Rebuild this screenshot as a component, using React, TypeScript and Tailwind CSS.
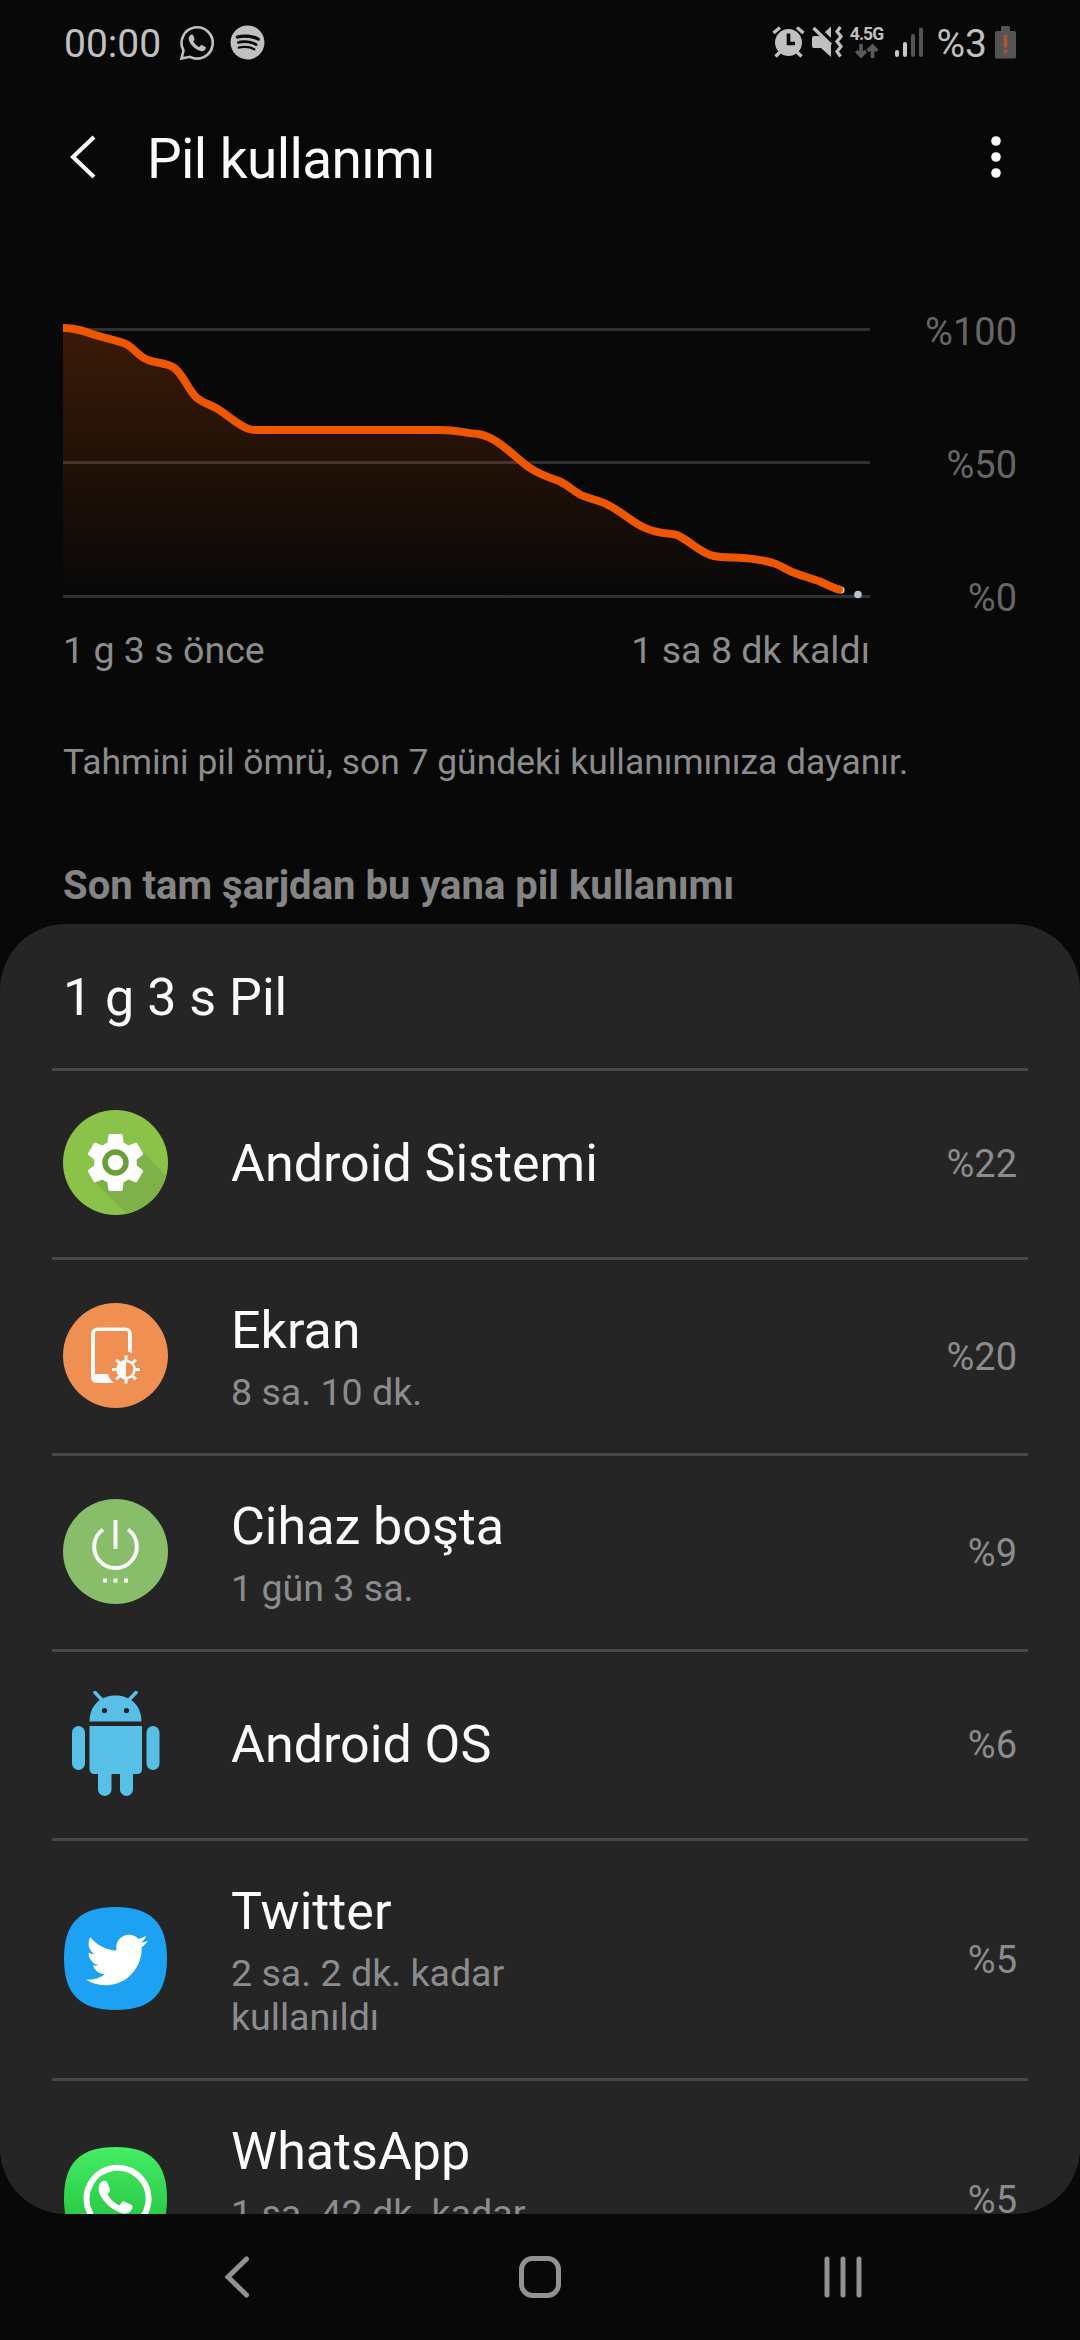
import { FaSpotify, FaTwitter } from "react-icons/fa";
import { MdSettings } from "react-icons/md";
import type { ReactNode } from "react";

interface AppUsage {
  name: string;
  detail?: string;
  percent: string;
  icon: ReactNode;
  height: string;
}

const HANDSET =
  "M190 900C180 903 174 915 176 928C180 955 215 990 252 998C265 999 277 990 278 976C278 972 250 960 249 961C246 963 242 970 238 973C228 970 208 952 203 939C206 936 211 930 210 927C208 918 203 905 200 901C197 899 193 899 190 900Z";

const SQUIRCLE =
  "M52.5 1C88 1 104 17 104 52.5C104 88 88 104 52.5 104C17 104 1 88 1 52.5C1 17 17 1 52.5 1Z";

const LINE =
  "M0 8C13 8 21 11 29 14C41 18 56 21 63 24C71 28 76 37 85 40C93 43 103 43 110 47C120 53 124 69 134 78C140 83 146 84 153 88C165 95 176 106 186 109C188 110 190 110 193 110H378C393 110 402 113 415 114C435 117 450 136 467 148C476 154 487 158 496 161C505 165 510 171 518 175C526 179 536 180 545 185C557 191 567 200 578 206C584 209 589 211 595 212C602 214 608 213 614 215C626 220 637 233 651 236C660 238 671 237 681 238C690 239 702 240 710 243C717 245 722 249 729 252C739 256 748 258 758 262C765 265 770 268 776 269.5";

const teeth = [0, 45, 90, 135, 180, 225, 270, 315];

function GearIcon() {
  return (
    <div className="relative flex size-[105px] items-center justify-center overflow-hidden rounded-full bg-[#8bc34a]">
      <svg className="absolute inset-0" viewBox="0 0 105 105">
        <path d="M31 71L65 105H105V68L80 42Z" fill="#7fb149" />
      </svg>
      <MdSettings className="relative size-[71px] text-white" />
      <svg className="absolute inset-0" viewBox="0 0 105 105">
        <circle cx="52.5" cy="52.5" r="10.5" fill="#fff" stroke="#689f38" strokeWidth="5.5" />
      </svg>
    </div>
  );
}

function ScreenIcon() {
  return (
    <svg viewBox="0 0 105 105" className="size-[105px]">
      <circle cx="52.5" cy="52.5" r="52.5" fill="#ef8f52" />
      <path d="M28 71V32Q28 24.5 35 24.5H62Q69 24.5 69 32V50L65 48.5V30Q65 28 63 28H34Q32 28 32 30V71H45Q46 76 51 80H34Q28 80 28 74Z" fill="#fafafa" />
      <circle cx="63" cy="66.5" r="8.5" fill="none" stroke="#fafafa" strokeWidth="2.5" />
      <path d="M63 58A8.5 8.5 0 0 0 63 75Z" fill="#fafafa" />
      {teeth.map((a) => (
        <path key={a} d="M63 52.5V57" stroke="#fafafa" strokeWidth="3" transform={`rotate(${a} 63 66.5)`} />
      ))}
    </svg>
  );
}

function IdleIcon() {
  return (
    <svg viewBox="0 0 105 105" className="size-[105px]">
      <circle cx="52.5" cy="52.5" r="52.5" fill="#88bd69" />
      <path d="M40 30.5A21.3 21.3 0 1 0 65 30.5M52.5 21V50" fill="none" stroke="#fafafa" strokeWidth="4" />
      <path d="M40 81.5H44M50.5 81.5H54.5M61 81.5H65" stroke="#fafafa" strokeWidth="4" />
    </svg>
  );
}

function AndroidIcon() {
  return (
    <svg viewBox="0 0 105 105" className="size-[105px]" fill="#58c0e6">
      <path d="M26.5 30.5C26.5 15 37 4.5 52.5 4.5S78.5 15 78.5 30.5Z" />
      <path d="M32 1.5L40 10M73 1.5L65 10" stroke="#58c0e6" strokeWidth="3.5" strokeLinecap="round" />
      <circle cx="41.5" cy="19.5" r="2.6" fill="#252525" />
      <circle cx="63.5" cy="19.5" r="2.6" fill="#252525" />
      <path d="M26.5 35H79V78Q79 83 74 83H31.5Q26.5 83 26.5 78Z" />
      <rect x="9" y="35" width="13" height="44" rx="6.5" />
      <rect x="83.5" y="35" width="13" height="44" rx="6.5" />
      <path d="M35 80H48.500V98.5A6.75 6.5 0 0 1 35 98.5ZM57 80H70V98.5A6.5 6.5 0 0 1 57 98.5Z" />
    </svg>
  );
}

function TwitterIcon() {
  return (
    <div className="relative flex size-[105px] items-center justify-center">
      <svg className="absolute inset-0" viewBox="0 0 105 105">
        <path d={SQUIRCLE} fill="#1da1f2" />
      </svg>
      <FaTwitter className="relative mt-1 ml-0.5 size-[62px] text-white" />
    </div>
  );
}

function WhatsAppIcon() {
  return (
    <svg viewBox="0 0 105 105" className="size-[105px]">
      <defs>
        <linearGradient id="wa" x1="0" y1="0" x2="0" y2="1">
          <stop offset="0" stopColor="#45ec66" />
          <stop offset="1" stopColor="#1dba35" />
        </linearGradient>
      </defs>
      <path d={SQUIRCLE} fill="url(#wa)" />
      <path d="M22 83L27 67A31 31 0 1 1 38 79Z" fill="none" stroke="#fff" strokeWidth="6" />
      <path d={HANDSET} fill="#fff" transform="translate(-23 -265) scale(.3333)" />
    </svg>
  );
}

function UsageRow({ name, detail, percent, icon, height }: AppUsage) {
  return (
    <li className={`flex shrink-0 items-center border-t-[3px] border-[#484848] px-[11px] pb-[3px] ${height}`}>
      {icon}
      <div className="ml-[63px] flex-1">
        <h3 className={`text-[52px] leading-[70px] text-[#fafafa] ${detail ? "" : "pt-[3px]"}`}>{name}</h3>
        {detail && <p className="mt-1 w-[310px] text-[37.6px] leading-[44px] text-[#8c8c8c]">{detail}</p>}
      </div>
      <span className="pt-[3px] text-[38px] leading-[44px] text-[#8c8c8c]">{percent}</span>
    </li>
  );
}

const usage: AppUsage[] = [
  { name: "Android Sistemi", percent: "%22", icon: <GearIcon />, height: "h-[189px]" },
  { name: "Ekran", detail: "8 sa. 10 dk.", percent: "%20", icon: <ScreenIcon />, height: "h-[196px]" },
  { name: "Cihaz boşta", detail: "1 gün 3 sa.", percent: "%9", icon: <IdleIcon />, height: "h-[196px]" },
  { name: "Android OS", percent: "%6", icon: <AndroidIcon />, height: "h-[189px]" },
  { name: "Twitter", detail: "2 sa. 2 dk. kadar kullanıldı", percent: "%5", icon: <TwitterIcon />, height: "h-[240px]" },
  { name: "WhatsApp", detail: "1 sa. 42 dk. kadar kullanıldı", percent: "%5", icon: <WhatsAppIcon />, height: "h-[240px]" },
];

function StatusBar() {
  return (
    <div className="flex h-[84px] items-center justify-between px-16 text-[#c0c0c0]">
      <div className="flex items-center">
        <span className="w-[116px] pt-[3px] text-[39px] leading-[44px]">00:00</span>
        <svg viewBox="0 0 34 35" className="h-[35px] w-[34px]">
          <path d="M1.5 33.5L3.5 25.5A15.6 15.6 0 1 1 10 31.8Z" fill="none" stroke="#c0c0c0" strokeWidth="2.6" />
          <path d={HANDSET} fill="#c0c0c0" transform="translate(-20.8 -141.5) scale(.168)" />
        </svg>
        <FaSpotify className="ml-4 size-[35px]" />
      </div>
      <div className="flex items-center">
        <svg viewBox="0 0 33 32" className="h-[32px] w-[33px]">
          <path d="M1.5 7L8 1.5M31.5 7L25 1.5M8 26L3.5 30.5M25 26L29.5 30.5" stroke="#c0c0c0" strokeWidth="3.4" />
          <circle cx="16.5" cy="16.5" r="13.5" fill="#c0c0c0" />
          <path d="M16.5 7.5V17.5H23" fill="none" stroke="#080808" strokeWidth="3.6" />
        </svg>
        <svg viewBox="0 0 32 32" className="ml-1.5 h-[32px] w-[32px]" fill="#c0c0c0">
          <path d="M1 12Q1 10 3 10H8L20 18V31L10 22H3Q1 22 1 20Z" />
          <path d="M2.5 2L20 19" stroke="#c0c0c0" strokeWidth="3.2" />
          <path d="M14 6L20 0.5V12Z" />
          <path d="M29.5 1L26 5.5L30 10.5L26 15.5L30 20.5L26 25.5L29.5 30.5" fill="none" stroke="#c0c0c0" strokeWidth="3.2" />
        </svg>
        <div className="ml-[7px] flex w-[34px] flex-col items-center">
          <span className="text-[17.5px] leading-[17px] font-bold tracking-[-0.9px]">4.5G</span>
          <svg viewBox="0 0 24 16" className="h-[16px] w-[24px]" fill="none" stroke="#5b5b5b" strokeWidth="3.6">
            <path d="M6 1V13M1.2 8L6 13L10.8 8M17.5 15V3M12.7 8L17.5 3L22.3 8" />
          </svg>
        </div>
        <svg viewBox="0 0 28 31" className="ml-[11px] h-[31px] w-[28px]" strokeWidth="4" strokeLinecap="round">
          <path d="M2 25V28M10 17V28" stroke="#c8c8c8" />
          <path d="M18 9V28M26 2.5V28" stroke="#545454" />
        </svg>
        <span className="ml-3.5 pt-[3px] text-[39px] leading-[44px]">%3</span>
        <svg viewBox="0 0 21 33" className="ml-2 h-[33px] w-[21px]">
          <path d="M6 5V1.5Q6 0 7.5 0H13.5Q15 0 15 1.500V5H19.5Q21 5 21 6.5V31Q21 32.5 19.5 32.5H1.5Q0 32.5 0 31V6.5Q0 5 1.5 5Z" fill="#545454" />
          <path d="M10.5 9V21.5M10.5 23.5V27" stroke="#b9522f" strokeWidth="3.6" />
        </svg>
      </div>
    </div>
  );
}

function BatteryChart() {
  return (
    <section className="mt-[90px] px-[63px]">
      <div className="flex h-[290px] justify-between">
        <svg viewBox="0 0 807 290" className="h-[290px] w-[807px]">
          <defs>
            <linearGradient id="usage" x1="0" y1="8" x2="0" y2="278" gradientUnits="userSpaceOnUse">
              <stop offset="0" stopColor="#f05a00" stopOpacity=".22" />
              <stop offset="1" stopColor="#f05a00" stopOpacity="0" />
            </linearGradient>
          </defs>
          <path d="M0 9.5H807M0 142.5H807M0 276.5H807" stroke="#303030" strokeWidth="3" />
          <path d={`${LINE}V278H0Z`} fill="url(#usage)" />
          <circle cx="778" cy="270" r="3.5" fill="#e8d8d0" />
          <path d={LINE} fill="none" stroke="#ee5700" strokeWidth="8" />
          <circle cx="776" cy="269.5" r="4" fill="#ee5700" />
          <circle cx="795" cy="274.5" r="3.8" fill="#b4c4cc" />
        </svg>
        <div className="-mt-[10px] flex h-[310px] flex-col justify-between text-right text-[38px] leading-[44px] text-[#666666]">
          <span>%100</span>
          <span>%50</span>
          <span>%0</span>
        </div>
      </div>
      <div className="mt-[18px] flex w-[807px] justify-between text-[37.6px] leading-[44px] text-[#8c8c8c]">
        <span>1 g 3 s önce</span>
        <span>1 sa 8 dk kaldı</span>
      </div>
    </section>
  );
}

export default function App() {
  return (
    <div className="flex h-[2340px] w-[1080px] flex-col overflow-hidden bg-[#080808] font-['Roboto',sans-serif]">
      <StatusBar />

      <header className="flex h-[146px] items-center pr-[79px] pl-[70px]">
        <svg viewBox="0 0 26 44" className="h-[44px] w-[26px]">
          <path d="M24 2L3 22L24 42" fill="none" stroke="#fafafa" strokeWidth="4.2" />
        </svg>
        <h1 className="ml-[51px] flex-1 pt-[3px] text-[55px] leading-[64px] tracking-[-0.6px] text-[#fafafa]">Pil kullanımı</h1>
        <svg viewBox="0 0 10 44" className="h-[44px] w-[10px]" fill="#fafafa">
          <circle cx="5" cy="6" r="4.8" />
          <circle cx="5" cy="22" r="4.8" />
          <circle cx="5" cy="38" r="4.8" />
        </svg>
      </header>

      <BatteryChart />

      <p className="mt-[69px] px-[63px] text-[35.4px] leading-[42px] text-[#8c8c8c]">
        Tahmini pil ömrü, son 7 gündeki kullanımınıza dayanır.
      </p>
      <h2 className="mt-[80px] px-[63px] text-[40px] leading-[46px] font-bold text-[#848484]">
        Son tam şarjdan bu yana pil kullanımı
      </h2>

      <main className="mt-[15px] flex h-[1290px] shrink-0 flex-col overflow-hidden rounded-[66px] bg-[#252525] px-[52px]">
        <h3 className="h-[144px] shrink-0 pt-[39px] pl-[11px] text-[52px] leading-[70px] text-[#fafafa]">1 g 3 s Pil</h3>
        <ul className="flex flex-col">
          {usage.map((item) => <UsageRow key={item.name} {...item} />)}
        </ul>
      </main>

      <nav className="flex h-[126px] shrink-0 items-center justify-between pr-[217px] pl-[223px]">
        <svg viewBox="0 0 26 44" className="h-[44px] w-[26px]" fill="none" stroke="#929292" strokeWidth="5">
          <path d="M23.5 4L5 22L23.5 40" strokeLinecap="round" />
        </svg>
        <svg viewBox="0 0 44 44" className="ml-2 h-[44px] w-[44px]" fill="none" stroke="#929292" strokeWidth="5">
          <rect x="3.5" y="3.5" width="37" height="37" rx="11" />
        </svg>
        <svg viewBox="0 0 40 44" className="h-[44px] w-[40px]" stroke="#929292" strokeWidth="5">
          <path d="M4 4V40M20 4V40M36 4V40" strokeLinecap="round" />
        </svg>
      </nav>
    </div>
  );
}
